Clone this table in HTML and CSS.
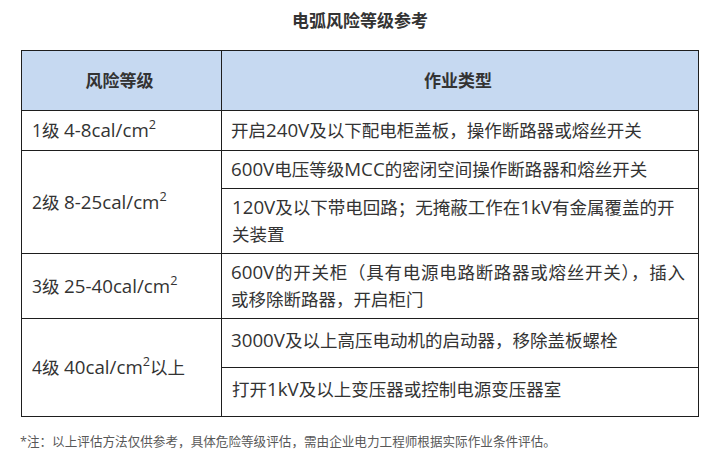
FILE: index.html
```html
<!DOCTYPE html>
<html lang="zh-CN">
<head>
<meta charset="utf-8">
<title>电弧风险等级参考</title>
<link rel="stylesheet" href="styles.css">
</head>
<body>
<div class="page">
  <h1 class="title">电弧风险等级参考</h1>
  <table class="risk">
    <colgroup><col class="c1"><col class="c2"></colgroup>
    <thead>
      <tr class="h-head"><th>风险等级</th><th>作业类型</th></tr>
    </thead>
    <tbody>
      <tr class="h40"><td>1级 <span class="en">4-8cal/cm<sup>2</sup></span></td><td>开启<span class="en">240V</span>及以下配电柜盖板，操作断路器或熔丝开关</td></tr>
      <tr class="h38"><td rowspan="2">2级 <span class="en">8-25cal/cm<sup>2</sup></span></td><td><span class="en">600V</span>电压等级<span class="en">MCC</span>的密闭空间操作断路器和熔丝开关</td></tr>
      <tr class="h65"><td><span class="en">120V</span>及以下带电回路；无掩蔽工作在<span class="en">1kV</span>有金属覆盖的开关装置</td></tr>
      <tr class="h65"><td>3级 <span class="en">25-40cal/cm<sup>2</sup></span></td><td><span class="en">600V</span>的开关柜（具有电源电路断路器或熔丝开关），插入<span class="keep">或移除断路器</span>，开启柜门</td></tr>
      <tr class="h49"><td rowspan="2">4级 <span class="en">40cal/cm<sup>2</sup></span>以上</td><td class="up"><span class="en">3000V</span>及以上高压电动机的启动器，移除盖板螺栓</td></tr>
      <tr class="h49"><td class="up">打开<span class="en">1kV</span>及以上变压器或控制电源变压器室</td></tr>
    </tbody>
  </table>
  <p class="note">*注：以上评估方法仅供参考，具体危险等级评估，需由企业电力工程师根据实际作业条件评估。</p>
</div>
</body>
</html>
```
FILE: styles.css
```css
html, body {
  margin: 0;
  padding: 0;
  background: #ffffff;
}
body {
  font-family: "Open Sans", "Noto Sans CJK SC", sans-serif;
  color: #333333;
}
.page {
  width: 720px;
  padding: 11px 0 0 21px;
  box-sizing: border-box;
}
.title {
  margin: 0 21px 0 0;
  text-align: center;
  font-size: 17px;
  line-height: 20px;
  font-weight: 700;
  color: #333333;
}
.risk {
  margin-top: 19px;
  width: 677px;
  border-collapse: collapse;
  table-layout: fixed;
  font-size: 17.5px;
  line-height: 27px;
}
.c1 { width: 200px; }
.c2 { width: 477px; }
.risk th, .risk td {
  border: 1px solid #1e1e1e;
  padding: 0 13px 0 9px;
  vertical-align: middle;
  text-align: justify;
}
.risk td:first-child {
  padding-left: 10px;
  text-align: left;
}
.risk th {
  background: #c6d9f1;
  text-align: center;
  font-weight: 700;
  font-size: 17px;
}
.en {
  font-size: 1.07em;
  line-height: 1;
}
.keep { white-space: nowrap; }
.risk sup {
  font-size: 0.68em;
  line-height: 0;
  vertical-align: 0.62em;
}
.h-head { height: 60px; }
.h40 { height: 40px; }
.h38 { height: 38px; }
.h65 { height: 65px; }
.h49 { height: 49px; }
.risk td.up { padding-bottom: 5px; }
.note {
  margin: 17px 0 0 -1px;
  font-size: 12.6px;
  line-height: 16px;
  color: #585858;
}
```
